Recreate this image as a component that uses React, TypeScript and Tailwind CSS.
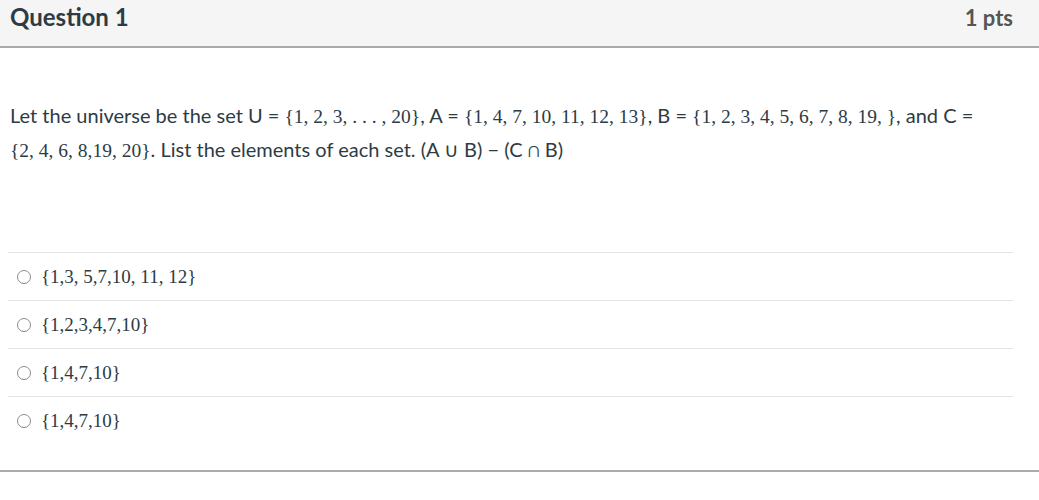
import React from "react";

function M({ children }: { children: React.ReactNode }) {
  return <span className="font-['Liberation_Serif',serif] text-[19.5px]">{children}</span>;
}

function Answer({ text }: { text: string }) {
  return (
    <div className="flex items-center h-[48px] border-t border-[#e3e3e3]">
      <span className="ml-[9px] w-[14px] h-[14px] rounded-full border border-[#8a8a8a] bg-white" />
      <span className="ml-[10px] text-[19px] text-[#2d3b45] font-['Liberation_Serif',serif] pt-[1px]">{text}</span>
    </div>
  );
}

export default function App() {
  return (
    <div className="w-[1039px] h-[500px] bg-white font-['Lato',sans-serif] text-[#2d3b45]">
      <div className="h-[48px] bg-[#f5f5f5] border-b-2 border-[#aaaaaa] flex items-center justify-between pl-[10px] pr-[26px] pb-[12px]">
        <span className="text-[24px] font-bold text-[#2d3b45]">Question 1</span>
        <span className="text-[22px] font-bold text-[#555555]">1 pts</span>
      </div>
      <div className="pl-[10px] pr-[40px] pt-[51px]">
        <p className="text-[20px] leading-[32px] text-[#2d3b45]">
          Let the universe be the set U = <M>{"{1, 2, 3, . . . , 20}"}</M>, A = <M>{"{1, 4, 7, 10, 11, 12, 13}"}</M>, B = <M>{"{1, 2, 3, 4, 5, 6, 7, 8, 19, }"}</M>, and C =
          <br />
          <M>{"{2, 4, 6, 8,19, 20}"}</M>. List the elements of each set. (A ∪ B) − (C ∩ B)
        </p>
      </div>
      <div className="ml-[8px] mr-[26px] mt-[85px]">
        <Answer text="{1,3, 5,7,10, 11, 12}" />
        <Answer text="{1,2,3,4,7,10}" />
        <Answer text="{1,4,7,10}" />
        <Answer text="{1,4,7,10}" />
      </div>
      <div className="mt-[26px] border-b-2 border-[#aaaaaa]" />
    </div>
  );
}
